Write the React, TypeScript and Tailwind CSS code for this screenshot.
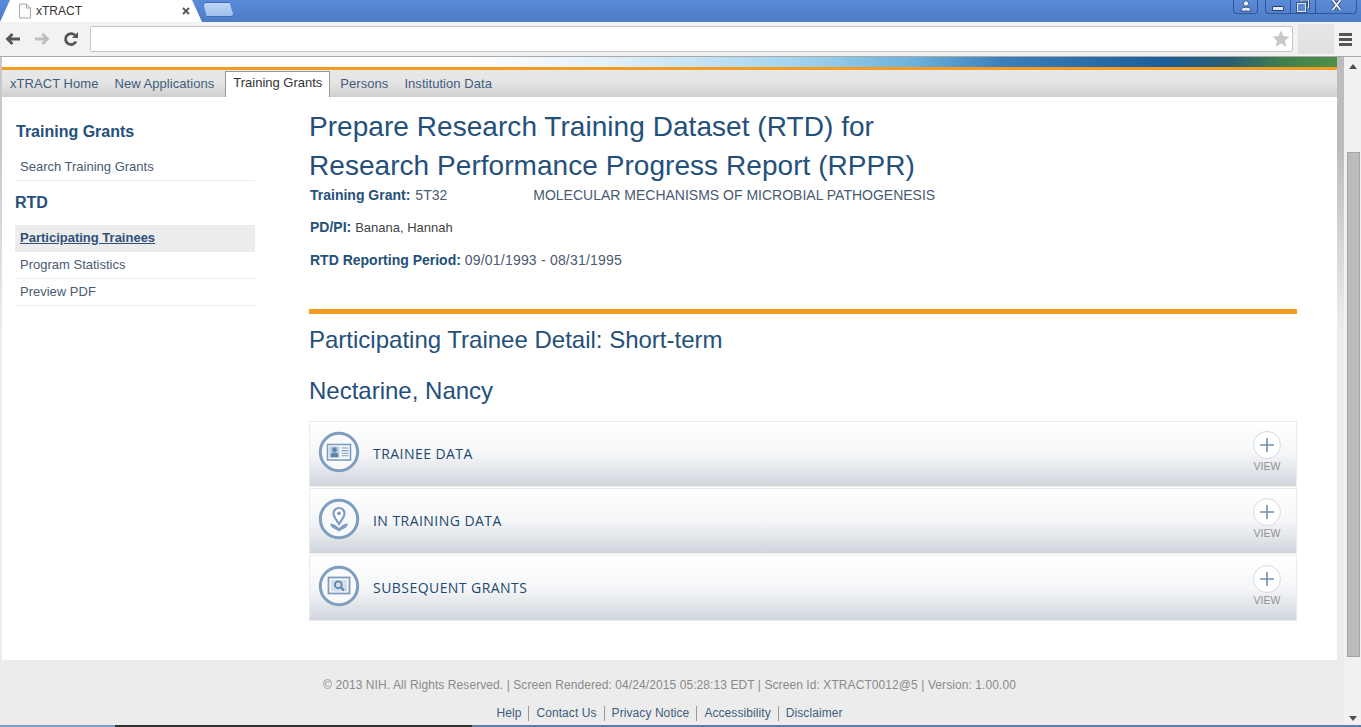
import React from 'react';

const sans = 'font-["Liberation_Sans",Arial,sans-serif]';

const NavTab = ({ label, active }: { label: string; active?: boolean }) =>
  active ? (
    <div className="h-[26px] mt-px px-[7px] bg-white border border-[#999] border-b-0 text-[13px] leading-[22px] text-[#333]">{label}</div>
  ) : (
    <div className="h-[27px] px-2 text-[13px] tracking-[0.05px] leading-[27px] text-[#3f5c7c]">{label}</div>
  );

const SideLink = ({ label, active }: { label: string; active?: boolean }) => (
  <div className={`h-[27px] pl-[5px] text-[13px] leading-[25px] border-b border-[#ececec] ${active ? 'bg-[#ececec] font-bold underline text-[#2f5078]' : 'text-[#4a5a70]'}`}>
    {label}
  </div>
);

const CardIcon = () => (
  <svg width="42" height="42" viewBox="0 0 42 42" fill="none">
    <circle cx="21" cy="21" r="18.7" stroke="#7f9dbf" strokeWidth="3" fill="#f7f9fb" />
    <rect x="9.5" y="13.5" width="23" height="15.5" stroke="#7f9dbf" strokeWidth="1.6" />
    <rect x="11.5" y="15.5" width="10" height="11.5" fill="#bccce0" />
    <circle cx="16.5" cy="18.7" r="2.4" fill="#5f82a9" />
    <path d="M12.8 26v-2.2c0-1.6 2-2.3 3.7-2.3s3.7.7 3.7 2.3V26z" fill="#5f82a9" />
    <path d="M23.5 17h7M23.5 19.6h7M23.5 22.2h7M23.5 24.8h7" stroke="#7f9dbf" strokeWidth="1.1" />
  </svg>
);

const PinIcon = () => (
  <svg width="42" height="42" viewBox="0 0 42 42" fill="none">
    <circle cx="21" cy="21" r="18.7" stroke="#7f9dbf" strokeWidth="3" fill="#f7f9fb" />
    <path d="M21 26c-3-4.600-5.500-7.500-5.500-10.500a5.500 5.500 0 0 1 11 0c0 3-2.500 5.900-5.500 10.500z" stroke="#7f9dbf" strokeWidth="2.200" fill="#fff" />
    <circle cx="21" cy="15.300" r="1.900" fill="#7f9dbf" />
    <path d="M12 25.500c3 .2 5.500 1.300 7 3l2 1.400 2-1.400c1.500-1.700 4-2.800 7-3-.6 3-3 5.500-6.300 6.200L21 33.500l-2.700-1.800C15 31 12.600 28.500 12 25.500z" fill="#7f9dbf" />
  </svg>
);

const SearchIcon = () => (
  <svg width="42" height="42" viewBox="0 0 42 42" fill="none">
    <circle cx="21" cy="21" r="18.7" stroke="#7f9dbf" strokeWidth="3" fill="#f7f9fb" />
    <rect x="10.500" y="12.500" width="21" height="16" stroke="#7f9dbf" strokeWidth="1.800" />
    <rect x="13" y="15" width="16" height="11.500" fill="#d3deea" />
    <circle cx="20.300" cy="19.800" r="3.400" stroke="#5f82a9" strokeWidth="1.800" />
    <path d="M22.800 22.300l3.200 3.200" stroke="#5f82a9" strokeWidth="2.200" />
  </svg>
);

const Section = ({ icon, label }: { icon: React.ReactNode; label: string }) => (
  <div className="h-[66px] border border-[#ebebeb] bg-gradient-to-b from-white via-[#f5f6f8] via-50% to-[#d0d6dd] flex items-center pr-[14px]">
    <div className="ml-[8px] pb-[4px] shrink-0 flex">{icon}</div>
    <div className="ml-[13px] pb-px flex-1 font-['Open_Sans',sans-serif] text-[14px] tracking-[0.45px] text-[#22486e]">{label}</div>
    <div className="w-[30px] flex flex-col items-center pb-[5px]">
      <div className="w-7 h-7 rounded-full border border-[#d6dade] bg-white flex items-center justify-center">
        <svg width="18" height="18" viewBox="0 0 18 18">
          <path d="M9 2v14M2 9h14" stroke="#6f90b3" strokeWidth="1.600" />
        </svg>
      </div>
      <div className={`${sans} text-[10.5px] leading-[12px] mt-px text-[#929292]`}>VIEW</div>
    </div>
  </div>
);

const FooterLink = ({ label, last }: { label: string; last?: boolean }) => (
  <span className={`px-[7px] h-[15px] leading-[15px] ${last ? '' : 'border-r border-[#999]'}`}>{label}</span>
);

export default function App() {
  return (
    <div className={`${sans} w-[1361px] h-[727px] overflow-hidden flex flex-col bg-white`}>
      {/* browser chrome */}
      <div className="h-[22px] shrink-0 bg-gradient-to-b from-[#5a8bd8] to-[#4d7cc6] flex">
        <div className="w-[202px] h-[22px] bg-white [clip-path:polygon(10px_0,192px_0,202px_100%,0_100%)] flex items-center pl-[18px] pr-[12px]">
          <svg width="14" height="16" viewBox="0 0 14 16" fill="none">
            <path d="M1.500 1h7l4 4v10h-11z" fill="#fbfbfb" stroke="#a8a8a8" />
            <path d="M8.500 1v4h4" stroke="#a8a8a8" />
          </svg>
          <span className="ml-[4px] flex-1 text-[12px] text-[#333]">xTRACT</span>
          <svg width="8" height="8" viewBox="0 0 8 8">
            <path d="M1 1l6 6M7 1L1 7" stroke="#555" strokeWidth="1.800" />
          </svg>
        </div>
        <div className="ml-px mt-[2px] w-[31px] h-[15px] rounded-[3px] bg-gradient-to-b from-[#bcd5f5] to-[#9fc0ec] border border-[#3f6cb4] [clip-path:polygon(0_0,85%_0,100%_100%,12%_100%)]" />
        <div className="flex-1" />
        <div className="h-[14px] w-[25px] mr-[7px] rounded-b-[4px] border border-t-0 border-[#2f5696] flex justify-center">
          <svg width="14" height="12" viewBox="0 0 14 12">
            <circle cx="7" cy="3.500" r="2.700" fill="#e6edf8" stroke="#25426e" strokeWidth="0.800" />
            <path d="M2 11c0-3 2-3.800 5-3.800S12 8 12 11z" fill="#e6edf8" stroke="#25426e" strokeWidth="0.800" />
          </svg>
        </div>
        <div className="h-[14px] w-[92px] mr-[4px] rounded-b-[4px] border border-t-0 border-[#2f5696] flex">
          <div className="w-[25px] border-r border-[#2f5696] flex justify-center items-end pb-[2px]">
            <div className="w-[12px] h-[5px] rounded-[1px] bg-[#dfe8f6] border border-[#25426e]" />
          </div>
          <div className="w-[25px] border-r border-[#2f5696] flex justify-center">
            <svg width="14" height="13" viewBox="0 0 14 13" fill="none">
              <rect x="5" y="0" width="7.500" height="8" stroke="#25426e" strokeWidth="2.400" />
              <rect x="5" y="0" width="7.500" height="8" stroke="#dfe8f6" strokeWidth="1" />
              <rect x="1.500" y="3.500" width="8" height="8" fill="#5a89d2" stroke="#25426e" strokeWidth="2.400" />
              <rect x="1.500" y="3.500" width="8" height="8" fill="#5a89d2" stroke="#dfe8f6" strokeWidth="1" />
            </svg>
          </div>
          <div className="flex-1 flex justify-center">
            <svg width="13" height="11" viewBox="0 0 13 11">
              <path d="M2.500 0l8 10M10.500 0l-8 10" stroke="#25426e" strokeWidth="3.400" />
              <path d="M2.500 0l8 10M10.500 0l-8 10" stroke="#eef3fb" strokeWidth="2" />
            </svg>
          </div>
        </div>
      </div>
      <div className="h-[35px] shrink-0 bg-[#f2f2f2] border-b border-[#a9a9a9] flex items-center">
        <div className="w-[90px] shrink-0 flex items-center pl-[5px] pb-[1px]">
          <svg width="16" height="14" viewBox="0 0 16 14" fill="none">
            <path d="M15 7H3M7.500 2L2.500 7l5 5" stroke="#555" strokeWidth="2.800" />
          </svg>
          <svg className="ml-[13px]" width="16" height="14" viewBox="0 0 16 14" fill="none">
            <path d="M1 7h12M8.500 2l5 5-5 5" stroke="#bdbdbd" strokeWidth="2.800" />
          </svg>
          <svg className="ml-[13px]" width="16" height="16" viewBox="0 0 16 16" fill="none">
            <path d="M13 10.500A5.500 5.500 0 1 1 12 4.200" stroke="#555" strokeWidth="2.800" />
            <path d="M9 7h6V1z" fill="#555" />
          </svg>
        </div>
        <div className="w-[1203px] h-[26px] mb-[1px] bg-white border border-[#c4c4c4] rounded-[2px] flex items-center justify-end pr-[2px]">
          <svg width="18" height="17" viewBox="0 0 18 17">
            <path d="M9 .5l2.500 5.600 6 .6-4.500 4 1.300 6L9 13.600 3.700 16.700l1.300-6-4.500-4 6-.6z" fill="#c9c9c9" />
          </svg>
        </div>
        <div className="ml-[5px] w-9 h-[30px] bg-gradient-to-b from-[#e6e6e6] to-[#e0e0e0]" />
        <div className="ml-[5px] w-[13px] flex flex-col gap-[2px]">
          <div className="h-[3px] bg-[#555]" />
          <div className="h-[3px] bg-[#555]" />
          <div className="h-[3px] bg-[#555]" />
        </div>
      </div>

      {/* page viewport */}
      <div className="flex-1 flex min-h-0">
        <div className="w-[1344px] shrink-0 flex flex-col">
          <div className="flex-1 flex min-h-0">
            <div className="w-[2px] shrink-0 bg-gradient-to-b from-[#c8c8c8] from-15% to-[#ececec] to-45%" />
            <div className="w-[1335px] shrink-0 flex flex-col">
              <div className="h-[10px] shrink-0 bg-[linear-gradient(90deg,#ffffff_35%,#e3f1f9_45%,#a5d5ee_59%,#6fb3dc_68%,#3a7fbb_75%,#1c5e9b_87%,#2a6070_92%,#3f8050_96%,#4f8f48_100%)]" />
              <div className="h-[3px] shrink-0 bg-[#f39c1f]" />
              <div className="h-[27px] shrink-0 bg-gradient-to-b from-[#e8e8e8] via-[#e4e4e4] to-[#cfcfcf] flex items-start">
                <NavTab label="xTRACT Home" />
                <NavTab label="New Applications" />
                <div className="w-[3px]" />
                <NavTab label="Training Grants" active />
                <div className="w-[2px]" />
                <NavTab label="Persons" />
                <NavTab label="Institution Data" />
              </div>
              <div className="flex-1 flex bg-white min-h-0">
                <div className="w-[240px] ml-[13px] shrink-0 pt-[25px]">
                  <div className="pl-px text-[16px] leading-[20px] font-bold text-[#24507a]">Training Grants</div>
                  <div className="mt-[12px]"><SideLink label="Search Training Grants" /></div>
                  <div className="text-[16px] leading-[20px] font-bold text-[#24507a] mt-[12px]">RTD</div>
                  <div className="mt-[12px]">
                    <SideLink label="Participating Trainees" active />
                    <SideLink label="Program Statistics" />
                    <SideLink label="Preview PDF" />
                  </div>
                </div>
                <div className="w-[988px] ml-[54px] shrink-0 pt-[10px]">
                  <h1 className="text-[28px] leading-[39px] font-normal text-[#24507a] tracking-[0.05px]">
                    Prepare Research Training Dataset (RTD) for
                    <br />
                    Research Performance Progress Report (RPPR)
                  </h1>
                  <div className="text-[14px] leading-[20px] text-[#4a5a70] pl-px">
                    <div className="flex">
                      <b className="text-[#24507a]">Training Grant:</b>
                      <span className="ml-[5px]">5T32</span>
                      <span className="ml-[86px]">MOLECULAR MECHANISMS OF MICROBIAL PATHOGENESIS</span>
                    </div>
                    <div className="mt-3">
                      <b className="text-[#24507a]">PD/PI:</b> <span className="text-[13px] text-[#444]">Banana, Hannah</span>
                    </div>
                    <div className="mt-3">
                      <b className="text-[#24507a]">RTD Reporting Period:</b> <span className="tracking-[0.2px]">09/01/1993 - 08/31/1995</span>
                    </div>
                  </div>
                  <div className="h-[5px] bg-[#f39c1f] mt-[39px]" />
                  <div className="text-[24px] leading-[28px] text-[#24507a] mt-[12px]">Participating Trainee Detail: Short-term</div>
                  <div className="text-[24px] leading-[28px] text-[#24507a] mt-[23px]">Nectarine, Nancy</div>
                  <div className="mt-[16px] flex flex-col gap-px">
                    <Section icon={<CardIcon />} label="TRAINEE DATA" />
                    <Section icon={<PinIcon />} label="IN TRAINING DATA" />
                    <Section icon={<SearchIcon />} label="SUBSEQUENT GRANTS" />
                  </div>
                </div>
              </div>
            </div>
            <div className="w-[7px] shrink-0 bg-gradient-to-b from-[#bcbcbc] from-15% to-[#ececec] to-45%" />
          </div>
          <div className="h-[65px] shrink-0 bg-[#ececec] flex flex-col items-center text-[12px] tracking-[0.08px] pr-[5px]">
            <div className="mt-[18px] leading-[15px] text-[#8a8a8a]">
              © 2013 NIH. All Rights Reserved. | Screen Rendered: 04/24/2015 05:28:13 EDT | Screen Id: XTRACT0012@5 | Version: 1.00.00
            </div>
            <div className="mt-[13px] flex text-[#3f5c7c]">
              <FooterLink label="Help" />
              <FooterLink label="Contact Us" />
              <FooterLink label="Privacy Notice" />
              <FooterLink label="Accessibility" />
              <FooterLink label="Disclaimer" last />
            </div>
          </div>
        </div>
        {/* scrollbar */}
        <div className="w-[17px] shrink-0 bg-[#f1f1f1] flex flex-col items-center pl-px">
          <div className="w-0 h-0 mt-[7px] border-x-[4px] border-x-transparent border-b-[5px] border-b-[#505050]" />
          <div className="mt-[83px] w-[13px] h-[505px] bg-[#bcbcbc] border border-[#a4a4a4]" />
          <div className="w-0 h-0 mt-[59px] border-x-[4px] border-x-transparent border-t-[5px] border-t-[#505050]" />
        </div>
      </div>
      {/* edge of the taskbar under the window */}
      <div className="h-[2px] shrink-0 flex">
        <div className="w-[115px] bg-[#7ea0c8]" />
        <div className="w-[357px] bg-[#333]" />
        <div className="flex-1 bg-[#5d7ea8]" />
      </div>
    </div>
  );
}
